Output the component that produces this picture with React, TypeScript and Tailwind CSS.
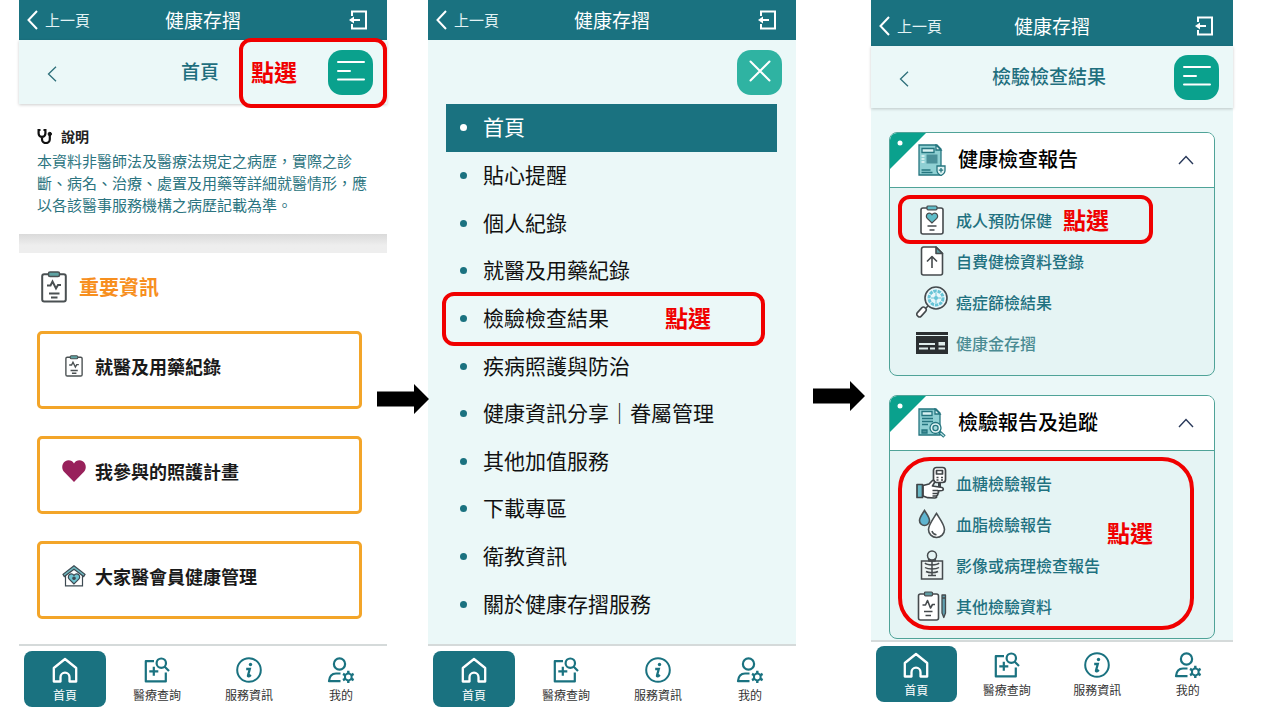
import type { ReactNode } from "react";

const menuItems = [
  "首頁",
  "貼心提醒",
  "個人紀錄",
  "就醫及用藥紀錄",
  "檢驗檢查結果",
  "疾病照護與防治",
  "健康資訊分享\uff5c眷屬管理",
  "其他加值服務",
  "下載專區",
  "衛教資訊",
  "關於健康存摺服務",
];

const notice = [
  "本資料非醫師法及醫療法規定之病歷\uff0c實際之診",
  "斷、病名、治療、處置及用藥等詳細就醫情形\uff0c應",
  "以各該醫事服務機構之病歷記載為準。",
];

const cards = [
  { icon: <ClipboardIcon className="w-[18px] h-[22px]" />, label: "就醫及用藥紀錄" },
  { icon: <HeartIcon />, label: "我參與的照護計畫" },
  { icon: <HouseHeartIcon />, label: "大家醫會員健康管理" },
];

const navItems = [
  { icon: <HomeIcon />, label: "首頁" },
  { icon: <MedicalSearchIcon />, label: "醫療查詢" },
  { icon: <InfoIcon />, label: "服務資訊" },
  { icon: <UserGearIcon />, label: "我的" },
];

const checkups = [
  { icon: <ClipboardHeartIcon />, label: "成人預防保健" },
  { icon: <UploadFileIcon />, label: "自費健檢資料登錄" },
  { icon: <CellSearchIcon />, label: "癌症篩檢結果" },
  { icon: <CardIcon />, label: "健康金存摺", muted: true },
];

const labs = [
  { icon: <GlucoseIcon />, label: "血糖檢驗報告" },
  { icon: <DropsIcon />, label: "血脂檢驗報告" },
  { icon: <XrayIcon />, label: "影像或病理檢查報告" },
  { icon: <ClipboardPenIcon />, label: "其他檢驗資料" },
];

/* ---------- icons ---------- */

function ClipboardIcon({ className }: { className: string }) {
  return (
    <svg viewBox="0 0 26 32" className={className} fill="none" stroke="#4a5052" strokeWidth="2">
      <rect x="1.2" y="3.2" width="23.6" height="27.4" rx="2" fill="#fff" />
      <rect x="7.5" y="1" width="11" height="4.4" rx="1.5" fill="#5fa3a3" strokeWidth="1.5" />
      <path d="M6 14.5h3.5l2-4 3.5 7 2-3.5h3M8 22.5h10.5M10 26.5h6.5" />
    </svg>
  );
}

function HeartIcon() {
  return (
    <svg viewBox="0 0 24 22" className="w-6 h-[22px]" fill="#98215b">
      <path d="M12 22 2 11.8C-.8 8.6-.2 3.4 3.3 1.3 6.6-.7 10.2.6 12 3.4 13.8.6 17.4-.7 20.7 1.3 24.2 3.4 24.8 8.6 22 11.8z" />
    </svg>
  );
}

function HouseHeartIcon() {
  return (
    <svg viewBox="0 0 24 22" className="w-6 h-[22px]" fill="none" stroke="#3d4a52" strokeWidth="1.2">
      <path d="M3.5 9v11.8h17V9L12 2.5z" fill="#fff" />
      <path d="M12 .8 1 9.3l1.3 2.2L12 4.3l9.7 7.2L23 9.3z" fill="#6fb9c0" />
      <path d="m12 19-4.8-4.8c-1.7-1.9-.8-5.1 1.8-5.4 1.3-.1 2.3.5 3 1.5.7-1 1.7-1.6 3-1.5 2.6.3 3.5 3.5 1.8 5.4z" fill="#6fc3d0" />
      <circle cx="12" cy="13.2" r="1.2" fill="#3d4a52" />
    </svg>
  );
}

function HomeIcon() {
  return (
    <svg viewBox="0 0 26 26" className="w-[26px] h-[26px]" fill="none" stroke="currentColor" strokeWidth="2.3" strokeLinejoin="round">
      <path d="M1.8 11 13 2l11.2 9v13.5h-6.7v-4.3a4.5 4.5 0 0 0-9 0v4.3H1.8z" />
    </svg>
  );
}

function MedicalSearchIcon() {
  return (
    <svg viewBox="0 0 26 26" className="w-[26px] h-[26px]" fill="none" stroke="currentColor" strokeWidth="2.2" strokeLinejoin="round">
      <path d="M10 4.2H1.8v20.2h20V15.5M9.8 9.8v9M5.3 14.3h9" />
      <circle cx="17.3" cy="6.2" r="4.7" />
      <path d="m20.5 9.5 4.5 4.5" />
    </svg>
  );
}

function InfoIcon() {
  return (
    <svg viewBox="0 0 26 26" className="w-[26px] h-[26px]" fill="none" stroke="currentColor" strokeWidth="2">
      <circle cx="13" cy="13" r="11.8" />
      <circle cx="14.5" cy="7.5" r="1.7" fill="currentColor" stroke="none" />
      <path d="M10.2 12h3.6l-1.8 6.5c-.3 1.3 1.2 1 2.8-.6" strokeWidth="2.3" />
    </svg>
  );
}

function UserGearIcon() {
  return (
    <svg viewBox="0 0 28 26" className="w-7 h-[26px]" fill="none" stroke="currentColor" strokeWidth="2.2">
      <circle cx="12.5" cy="7" r="5.6" />
      <path d="M13.5 24.2H2c.4-5 3-7.7 7-7.7h4.5" strokeLinejoin="round" />
      <path d="M21.3 13.8v12.4M16 16.9l10.6 6.2M16 23.1l10.6-6.2" strokeWidth="2.4" />
      <circle cx="21.3" cy="20" r="3.4" fill="#fff" strokeWidth="2" />
    </svg>
  );
}

function ClipboardHeartIcon() {
  return (
    <svg viewBox="0 0 24 30" className="w-6 h-[30px]" fill="none" stroke="#454a4d" strokeWidth="1.6">
      <rect x="1" y="3" width="22" height="26" rx="2" fill="#fff" />
      <rect x="7" y="1" width="10" height="3.8" rx="1" fill="#5fbcc8" strokeWidth="1.2" />
      <path d="m12 18-4.8-4.6c-1.7-1.9-.8-4.9 1.8-5.2 1.3-.1 2.3.5 3 1.5.7-1 1.7-1.6 3-1.5 2.6.3 3.5 3.3 1.8 5.2z" fill="#5fbcc8" strokeWidth="1.2" />
      <path d="M7.5 21h9M9.5 25h5" />
    </svg>
  );
}

function UploadFileIcon() {
  return (
    <svg viewBox="0 0 24 30" className="w-6 h-[30px]" fill="none" stroke="#454a4d" strokeWidth="1.6" strokeLinejoin="round">
      <path d="M3.5 1H16l6.5 6.5V27a2 2 0 0 1-2 2h-17a2 2 0 0 1-2-2V3a2 2 0 0 1 2-2z" fill="#fff" />
      <path d="M16 1v6.5h6.5z" fill="#5f9da3" />
      <path d="M12 22V11M7 15.5l5-5 5 5" />
    </svg>
  );
}

function CellSearchIcon() {
  return (
    <svg viewBox="0 0 32 32" className="w-8 h-8" fill="none" stroke="#454a4d" strokeWidth="1.6">
      <circle cx="20" cy="12" r="11" fill="#e9f7fa" />
      <circle cx="20" cy="12" r="7" stroke="#68c4d6" strokeWidth="3" strokeDasharray="3.4 .9" />
      <circle cx="20" cy="12" r="2" fill="#68c4d6" stroke="none" />
      <path d="M20 7v10M15 12h10" stroke="#68c4d6" strokeWidth="1" />
      <path d="m12 20-2.5 2.5" />
      <rect x="-2.6" y="-5.5" width="5.2" height="11" rx="2.3" transform="translate(5.5 26) rotate(42)" fill="#fff" />
    </svg>
  );
}

function CardIcon() {
  return (
    <svg viewBox="0 0 32 24" className="w-8 h-6" fill="#2b2f31">
      <path d="M0 1h32v3H0zM0 5h32v18H0z" />
      <path d="M3 13h16M3 17.5h9M14 17.5h5M22.5 17.5H29" stroke="#dfeceb" strokeWidth="1.8" />
      <rect x="22.5" y="11" width="6.5" height="3.5" fill="#dfeceb" />
    </svg>
  );
}

function GlucoseIcon() {
  return (
    <svg viewBox="0 0 32 34" className="w-8 h-[34px]" fill="none" stroke="#3f4447" strokeWidth="1.7" strokeLinejoin="round">
      <rect x="17.5" y="1.5" width="12" height="15" rx="3" fill="#fff" />
      <rect x="20.5" y="4.5" width="6" height="3.5" />
      <path d="M20.5 11.5h2M25 11.5h2M20.5 14h2M25 14h2" />
      <path d="M23.5 16.5v5" strokeWidth="3" />
      <path d="M7 19.5l6-1.5 3.5-3.5c1.8-.5 2.5 1 1.8 2.3L16.500 20l9.500 1.500c1.800.5 1.600 2.800 0 3l-4 .3c1 1.200.6 2.300-.5 2.600.7 1 .2 2-.8 2.300.4 1.600-.6 2.300-2 2.300l-7-.3L7 30z" fill="#fff" />
      <path d="M16.5 24.5H22M16.5 27.5h5M16.5 30h4" />
      <path d="M1 18.5h5.5v13H1z" fill="#68b7c4" />
    </svg>
  );
}

function DropsIcon() {
  return (
    <svg viewBox="0 0 28 30" className="w-7 h-[30px]" fill="none" stroke="#4a5052" strokeWidth="1.6">
      <path d="M6.5 1.5C4 5.5 1.5 8.6 1.5 11.5a5 5 0 0 0 10 0c0-2.9-2.5-6-5-10z" fill="#5fb4cf" />
      <path d="M18.5 4.5c-4.5 7-8 11.5-8 16a8 8 0 0 0 16 0c0-4.5-3.5-9-8-16z" fill="#fff" />
      <path d="M14 22c.6 2.2 2.3 3.6 4.5 3.7" />
    </svg>
  );
}

function XrayIcon() {
  return (
    <svg viewBox="0 0 24 30" className="w-6 h-[30px]" fill="none" stroke="#454a4d" strokeWidth="1.5">
      <circle cx="12" cy="5.5" r="4.5" fill="#e5f4f4" />
      <rect x="1.5" y="11" width="21" height="18" fill="#eef4f4" />
      <path d="M8.5 8.5 9 11h6l.5-2.5M12 11v15M5 13c2 2.5 12 2.5 14 0M5 17.5c3 2 11 2 14 0M6 21.5c3 1.6 9 1.6 12 0M8 25.5h8" />
    </svg>
  );
}

function ClipboardPenIcon() {
  return (
    <svg viewBox="0 0 30 30" className="w-[30px] h-[30px]" fill="none" stroke="#454a4d" strokeWidth="1.6" strokeLinejoin="round">
      <rect x="1.5" y="3" width="20" height="26" rx="2" fill="#fff" />
      <rect x="7.5" y="1" width="8" height="3.8" rx="1" fill="#5f9da3" strokeWidth="1.2" />
      <path d="M5.5 14h3l2-4.5 3 7.5 2-3.5H18M7 20.5h8.5M8.5 24.5H14" />
      <path d="M25 4h3.5v18l-1.7 4.5L25 22zM25 7h3.5" fill="#5fa0b0" strokeWidth="1.3" />
    </svg>
  );
}

function HealthReportIcon() {
  return (
    <svg viewBox="0 0 28 32" className="w-7 h-8" fill="none" stroke="#25757f" strokeWidth="1.3">
      <path d="M1 1h18l4 4v26H1z" fill="#8fd0d3" />
      <path d="M18 1v5h5z" fill="#e0f3f3" />
      <path d="M4 4.5h12v4H4z" fill="#d9f2f2" />
      <path d="M3.5 12h3M3.5 15h3M3.5 18h3" stroke="#e7f7f7" />
      <path d="M8.5 10.5h11v9h-11z" fill="#4a9099" stroke="none" />
      <path d="M3.5 26h9M3.5 28.5h11" />
      <path d="M19 22h8v4.5c0 2.5-2 4-4 5-2-1-4-2.5-4-5z" fill="#dff3f3" />
      <path d="M23 24v4.5M20.8 26.2h4.4" />
    </svg>
  );
}

function TrackReportIcon() {
  return (
    <svg viewBox="0 0 28 30" className="w-7 h-[30px]" fill="none" stroke="#25757f" strokeWidth="1.3">
      <path d="M1 1h17l4 4v22H1z" fill="#8fd0d3" />
      <path d="M17 1v5h5z" fill="#e0f3f3" />
      <path d="M4 3.5h10v4H4z" fill="#d9f2f2" />
      <path d="M4 10.5h11M4 13.5h11M4 16.5h6" />
      <path d="M4 22h5v3H4z" fill="#4a9099" />
      <circle cx="17.5" cy="20" r="5.5" fill="#e3f4f5" />
      <circle cx="17.5" cy="20" r="2.6" fill="#a8dadd" />
      <path d="m21.5 24 5 4.5" strokeWidth="3.5" />
      <path d="m22.5 25 3.5 3" stroke="#bfe5e7" strokeWidth="1.2" />
    </svg>
  );
}

function StethoscopeIcon() {
  return (
    <svg viewBox="0 0 16 16" className="w-4 h-4" fill="none" stroke="#111" strokeWidth="2.2">
      <path d="M3.5 2H1.6v3.5a3.4 3.4 0 0 0 6.8 0V2H6.500M5 9v2.200a3.900 3.900 0 0 0 7.800 0V7" />
      <circle cx="12.8" cy="6" r="1.7" fill="#111" strokeWidth="1" />
    </svg>
  );
}

/* ---------- shared pieces ---------- */

function Header({ tall = false }: { tall?: boolean }) {
  return (
    <header
      className={`grid grid-cols-[1fr_auto_1fr] items-center bg-[#1a7280] px-2 text-white ${
        tall ? "h-[46px] pt-1.5" : "h-10"
      }`}
    >
      <button className="flex items-center gap-[7px] text-[15px] leading-5 text-[#e3f3f5]">
        <svg viewBox="0 0 11 20" className="w-[11px] h-5" fill="none" stroke="#fff" strokeWidth="2">
          <path d="M10 1 1.5 10l8.5 9" />
        </svg>
        上一頁
      </button>
      <h1 className="text-[19px] leading-6">健康存摺</h1>
      <button aria-label="登出" className="justify-self-end mr-3">
        <svg viewBox="0 0 18 20" className="w-[18px] h-5" fill="none" stroke="#fff" strokeWidth="2">
          <path d="M3 6V1.5h14v17H3V14M2 10h9" />
          <path d="M5 6.5 0 10l5 3.5z" fill="#fff" stroke="none" />
        </svg>
      </button>
    </header>
  );
}

function SubHeader({ title, tall = false, children }: { title: string; tall?: boolean; children?: ReactNode }) {
  return (
    <div
      className={`relative grid grid-cols-[1fr_auto_1fr] items-center bg-[#ebf8f8] pl-2 pr-3.5 shadow-[0_1px_3px_rgba(0,0,0,0.2)] ${
        tall ? "h-16" : "h-[62px]"
      }`}
    >
      <button aria-label="返回" className="justify-self-start ml-5 pt-1">
        <svg viewBox="0 0 10 16" className="w-2.5 h-4" fill="none" stroke="#2d6f7a" strokeWidth="1.3">
          <path d="M9 .8 1.5 8 9 15.2" />
        </svg>
      </button>
      <h2 className="pb-0.5 text-[19px] leading-6 font-medium text-[#1f6f7e]">{title}</h2>
      <button aria-label="選單" className="justify-self-end rounded-[14px] bg-[#0aa18d]">
        <svg viewBox="0 0 45 45" className="w-[45px] h-[45px]" stroke="#fff" strokeWidth="2" strokeLinecap="round">
          <path d="M10 12h26M10 21h12M10 29.5h26" />
        </svg>
      </button>
      {children}
    </div>
  );
}

function BottomNav({ tall = false }: { tall?: boolean }) {
  return (
    <nav className={`grid grid-cols-4 items-start border-t-2 border-[#d5dada] bg-white ${tall ? "h-20 pt-1" : "h-[76px] pt-[5px]"}`}>
      {navItems.map((item, i) => (
        <a
          key={item.label}
          href="#"
          className={`flex flex-col items-center rounded-lg mx-[5px] pt-1.5 h-14 ${i === 0 ? "bg-[#1a7280] text-white" : "text-[#1a7280]"}`}
        >
          {item.icon}
          <span className={`text-xs leading-4 mt-1 ${i === 0 ? "text-white" : "text-[#333]"}`}>{item.label}</span>
        </a>
      ))}
    </nav>
  );
}

function Mark({ className }: { className: string }) {
  return (
    <div className={`absolute pointer-events-none flex items-center border-4 border-[#f00000] text-[23px] leading-8 font-bold text-[#f00000] ${className}`}>
      點選
    </div>
  );
}

function Arrow({ className }: { className: string }) {
  return (
    <div className={`relative z-10 ${className}`}>
      <svg viewBox="0 0 52 30" className="w-[52px] h-[30px] max-w-none">
        <path d="M0 7.5h37V0l15 15-15 15v-7.5H0z" />
      </svg>
    </div>
  );
}

type Item = { icon: ReactNode; label: string; muted?: boolean };

type PanelProps = {
  title: string;
  icon: ReactNode;
  items: Item[];
  mark?: string;
  listMark?: string;
};

function Panel({ title, icon, items, mark, listMark }: PanelProps) {
  return (
    <section className="relative rounded-lg border border-[#4fa398] bg-[#e5f4f4]">
      <button className="relative flex w-full items-center rounded-t-[7px] overflow-hidden border-b border-[#4fa398] bg-white h-[55px] pl-7 pr-5">
        <svg viewBox="0 0 36 36" className="absolute left-0 top-0 w-9 h-9">
          <path d="M0 0h36L0 36z" fill="#0aa18d" />
          <circle cx="10" cy="10" r="2.5" fill="#fff" />
        </svg>
        <span className="relative w-7">{icon}</span>
        <span className="ml-3 pb-0.5 text-xl font-medium text-black">{title}</span>
        <svg viewBox="0 0 16 10" className="ml-auto w-4 h-2.5" fill="none" stroke="#29395a" strokeWidth="1.4">
          <path d="m1 9 7-7.5L15 9" />
        </svg>
      </button>
      <ul className="pt-[11px] pb-3">
        {items.map((item, i) => (
          <li key={item.label} className="relative h-[41px] pl-[26px]">
            <a href="#" className={`flex h-full items-center font-medium ${item.muted ? "text-[#4b8b93]" : "text-[#1f7180]"}`}>
              <span className="flex w-8 justify-center">{item.icon}</span>
              <span className="ml-2 text-base">{item.label}</span>
            </a>
            {mark && i === 0 && <Mark className={mark} />}
          </li>
        ))}
      </ul>
      {listMark && <Mark className={listMark} />}
    </section>
  );
}

/* ---------- screens ---------- */

function HomeScreen() {
  return (
    <div className="flex flex-col">
      <Header />
      <SubHeader title="首頁" tall>
        <Mark className="right-0 -top-[2px] w-[148px] h-[70px] rounded-xl pl-2 pb-1" />
      </SubHeader>
      <section className="bg-white pl-[18px] pt-5 h-[130px]">
        <h3 className="flex items-center gap-2 text-[14px] leading-6 font-bold text-[#222]">
          <StethoscopeIcon />
          說明
        </h3>
        <p className="mt-0.5 text-[15px] leading-[22px] whitespace-nowrap text-[#2b7480]">
          {notice.map((line) => (
            <span key={line} className="block">
              {line}
            </span>
          ))}
        </p>
      </section>
      <div className="h-[19px] bg-linear-to-b from-[#dadada] to-[#eeeeee] to-60%" />
      <section className="flex-1 pl-[18px] pr-[25px] pt-[18px]">
        <h3 className="flex items-center gap-3 pl-1 text-xl leading-8 font-bold text-[#f78f1e]">
          <ClipboardIcon className="w-[26px] h-8" />
          重要資訊
        </h3>
        <div className="mt-7 flex flex-col gap-[27px]">
          {cards.map((c) => (
            <button
              key={c.label}
              className="flex items-start rounded-[5px] border-[3px] border-[#f3a529] h-[78px] pl-5 pt-[18px] text-left"
            >
              <span className="flex h-7 w-7 items-center justify-center">{c.icon}</span>
              <span className="ml-[7px] text-[18px] leading-7 font-bold text-[#1a1a1a]">{c.label}</span>
            </button>
          ))}
        </div>
      </section>
      <BottomNav />
    </div>
  );
}

function MenuScreen() {
  return (
    <div className="flex flex-col bg-[#ebf8f8]">
      <Header />
      <div className="flex h-16 items-center justify-end pr-3.5">
        <button aria-label="關閉" className="rounded-[14px] bg-[#2fb3a2]">
          <svg viewBox="0 0 45 45" className="w-[45px] h-[45px]" stroke="#fff" strokeWidth="2" strokeLinecap="round">
            <path d="m13.5 11.5 19 19M32.5 11.5l-19 19" />
          </svg>
        </button>
      </div>
      <ul className="flex flex-1 flex-col ml-[18px] mr-[19px] mb-4">
        {menuItems.map((item, i) => (
          <li key={item} className={`relative flex flex-1 ${i === 0 ? "bg-[#1a7280] text-white" : "text-[#111]"}`}>
            <a href="#" className="flex flex-1 items-center gap-4 pl-3.5 text-[21px] leading-7">
              <span className={`h-[7px] w-[7px] rounded-full ${i === 0 ? "bg-white" : "bg-[#1a7280]"}`} />
              <span className="pb-[3px]">{item}</span>
            </a>
            {item === "檢驗檢查結果" && (
              <Mark className="-left-1 right-3 -top-[3px] -bottom-1 justify-end rounded-xl pr-[50px] pb-1" />
            )}
          </li>
        ))}
      </ul>
      <BottomNav />
    </div>
  );
}

function ResultScreen() {
  return (
    <div className="flex flex-col bg-[#ebf8f8]">
      <Header tall />
      <SubHeader title="檢驗檢查結果" />
      <div className="flex flex-1 flex-col gap-[19px] px-[18px] pt-6">
        <Panel
          title="健康檢查報告"
          icon={<HealthReportIcon />}
          items={checkups}
          mark="left-2 -top-1 right-[61px] h-[49px] rounded-xl pl-[161px] pb-0.5"
        />
        <Panel
          title="檢驗報告及追蹤"
          icon={<TrackReportIcon />}
          items={labs}
          listMark="left-2 right-5 top-[61px] h-[173px] rounded-[32px] pl-[205px] pb-6"
        />
      </div>
      <BottomNav tall />
    </div>
  );
}

export default function App() {
  return (
    <main className="grid min-h-screen grid-cols-[368fr_41px_368fr_75px_362fr] bg-white pl-[19px] pr-[47px] font-['Noto_Sans_CJK_TC',sans-serif]">
      <HomeScreen />
      <Arrow className="-ml-2.5 pt-96" />
      <MenuScreen />
      <Arrow className="pl-[17px] pt-[381px]" />
      <ResultScreen />
    </main>
  );
}
